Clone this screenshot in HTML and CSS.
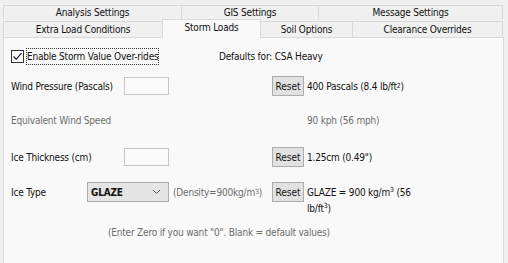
FILE: index.html
```html
<!DOCTYPE html>
<html lang="en">
<head>
    <meta charset="UTF-8">
    <title>Storm Loads</title>
    <link rel="stylesheet" href="styles.css">
</head>
<body>

    <div class="tabs">
        <div class="tab-row top-row">
            <div class="tab w-analysis">Analysis Settings</div>
            <div class="tab w-gis">GIS Settings</div>
            <div class="tab w-message">Message Settings</div>
        </div>
        <div class="tab-row bottom-row">
            <div class="tab w-extra">Extra Load Conditions</div>
            <div class="tab w-storm selected">Storm Loads</div>
            <div class="tab w-soil">Soil Options</div>
            <div class="tab w-clear">Clearance Overrides</div>
        </div>
    </div>

    <div class="panel">
        <div class="form">
            <div class="cell span-check">
                <span class="checkbox">
                    <svg width="11" height="11" viewBox="0 0 11 11"><path d="M1.5 5.5 L4.2 8.2 L9.5 2.2" fill="none" stroke="#222" stroke-width="1.2"/></svg>
                </span>
                <span class="focus-label">Enable Storm Value Over-rides</span>
            </div>
            <div class="cell span-defaults">Defaults for: CSA Heavy</div>

            <div class="cell span-label">Wind Pressure (Pascals)</div>
            <div class="cell col-input"><span class="textbox"></span></div>
            <div class="cell col-reset"><button class="reset">Reset</button></div>
            <div class="cell col-value">400 Pascals (8.4 lb/ft<sup>2</sup>)</div>

            <div class="cell span-label muted">Equivalent Wind Speed</div>
            <div class="cell col-value muted">90 kph (56 mph)</div>

            <div class="cell span-label">Ice Thickness (cm)</div>
            <div class="cell col-input"><span class="textbox"></span></div>
            <div class="cell col-reset"><button class="reset">Reset</button></div>
            <div class="cell col-value">1.25cm (0.49")</div>

            <div class="cell col-label">Ice Type</div>
            <div class="cell span-select">
                <span class="select">GLAZE
                    <svg width="9" height="6" viewBox="0 0 9 6"><path d="M1 1 L4.5 4.5 L8 1" fill="none" stroke="#555" stroke-width="1"/></svg>
                </span>
            </div>
            <div class="cell span-density muted">(Density=900kg/m<sup>3</sup>)</div>
            <div class="cell col-reset"><button class="reset">Reset</button></div>
            <div class="cell col-value wrap">GLAZE = 900 kg/m<sup>3</sup> (56<br>lb/ft<sup>3</sup>)</div>

            <div class="cell span-note muted">(Enter Zero if you want "0". Blank = default values)</div>
        </div>
    </div>

</body>
</html>
```

FILE: styles.css
```css
body {
    margin: 0;
    background: #f0f0f0;
    font-family: "DejaVu Sans Condensed", "DejaVu Sans", sans-serif;
    font-size: 10px;
    color: #111;
    overflow: hidden;
}
.tabs {
    margin: 5px 0 0 3px;
}
.tab-row {
    display: flex;
    align-items: flex-end;
}
.tab {
    box-sizing: border-box;
    border: 1px solid #d9d9d9;
    border-bottom: none;
    margin-left: -1px;
    background: #f0f0f0;
    text-align: center;
    letter-spacing: -0.2px;
}
.tab:first-child {
    margin-left: 0;
}
.top-row .tab {
    height: 14px;
    line-height: 13px;
}
.bottom-row .tab {
    height: 16px;
    line-height: 15px;
}
.bottom-row .selected {
    height: 19px;
    line-height: 15px;
    margin-bottom: -1px;
    background: #f9f9f9;
    position: relative;
    z-index: 1;
}
.w-analysis { width: 179px; }
.w-gis { width: 138px; }
.w-message { width: 185px; }
.w-extra { width: 160px; }
.w-storm { width: 99px; }
.w-soil { width: 93px; }
.w-clear { width: 151px; }

.panel {
    box-sizing: border-box;
    margin-left: 3px;
    width: 501px;
    height: 227px;
    border: 1px solid #d9d9d9;
    border-bottom: none;
    background: #f9f9f9;
    padding: 8px 0 0 7px;
}
.form {
    display: grid;
    grid-template-columns: 76px 37px 45px 50px 53px 35px 1fr;
    grid-template-rows: 30px 34px 37px 35px 40px 20px;
    align-items: start;
    letter-spacing: -0.2px;
}
.cell {
    height: 20px;
    display: flex;
    align-items: center;
    white-space: nowrap;
}
.muted {
    color: #6d6d6d;
}
sup {
    font-size: 7px;
    line-height: 0;
    vertical-align: 4px;
}
.span-check { grid-column: 1 / 5; }
.span-defaults { grid-column: 5 / 8; }
.span-label { grid-column: 1 / 3; }
.col-label { grid-column: 1; }
.col-input { grid-column: 3; }
.col-reset { grid-column: 6; }
.col-value { grid-column: 7; }
.span-select { grid-column: 2 / 4; }
.span-density { grid-column: 4 / 6; padding-left: 4px; }
.span-note { grid-column: 2 / 8; padding-left: 21px; }

.checkbox {
    box-sizing: border-box;
    width: 13px;
    height: 13px;
    border: 1px solid #333;
    background: #fff;
    display: flex;
    align-items: center;
    justify-content: center;
    margin-right: 2px;
}
.focus-label {
    border: 1px dotted #333;
    padding: 2px 0;
}
.textbox {
    box-sizing: border-box;
    width: 45px;
    height: 18px;
    border: 1px solid #c6c6c6;
    background: #fbfbfb;
}
.reset {
    box-sizing: border-box;
    width: 32px;
    height: 20px;
    padding: 0;
    border: 1px solid #adadad;
    background: #e1e1e1;
    font: inherit;
    color: #111;
}
.select {
    box-sizing: border-box;
    width: 82px;
    height: 20px;
    border: 1px solid #adadad;
    background: #e5e5e5;
    display: flex;
    align-items: center;
    justify-content: space-between;
    padding: 0 7px 0 3px;
    font-weight: bold;
}
.wrap {
    height: auto;
    display: block;
    padding-top: 3px;
    line-height: 16px;
}
```
